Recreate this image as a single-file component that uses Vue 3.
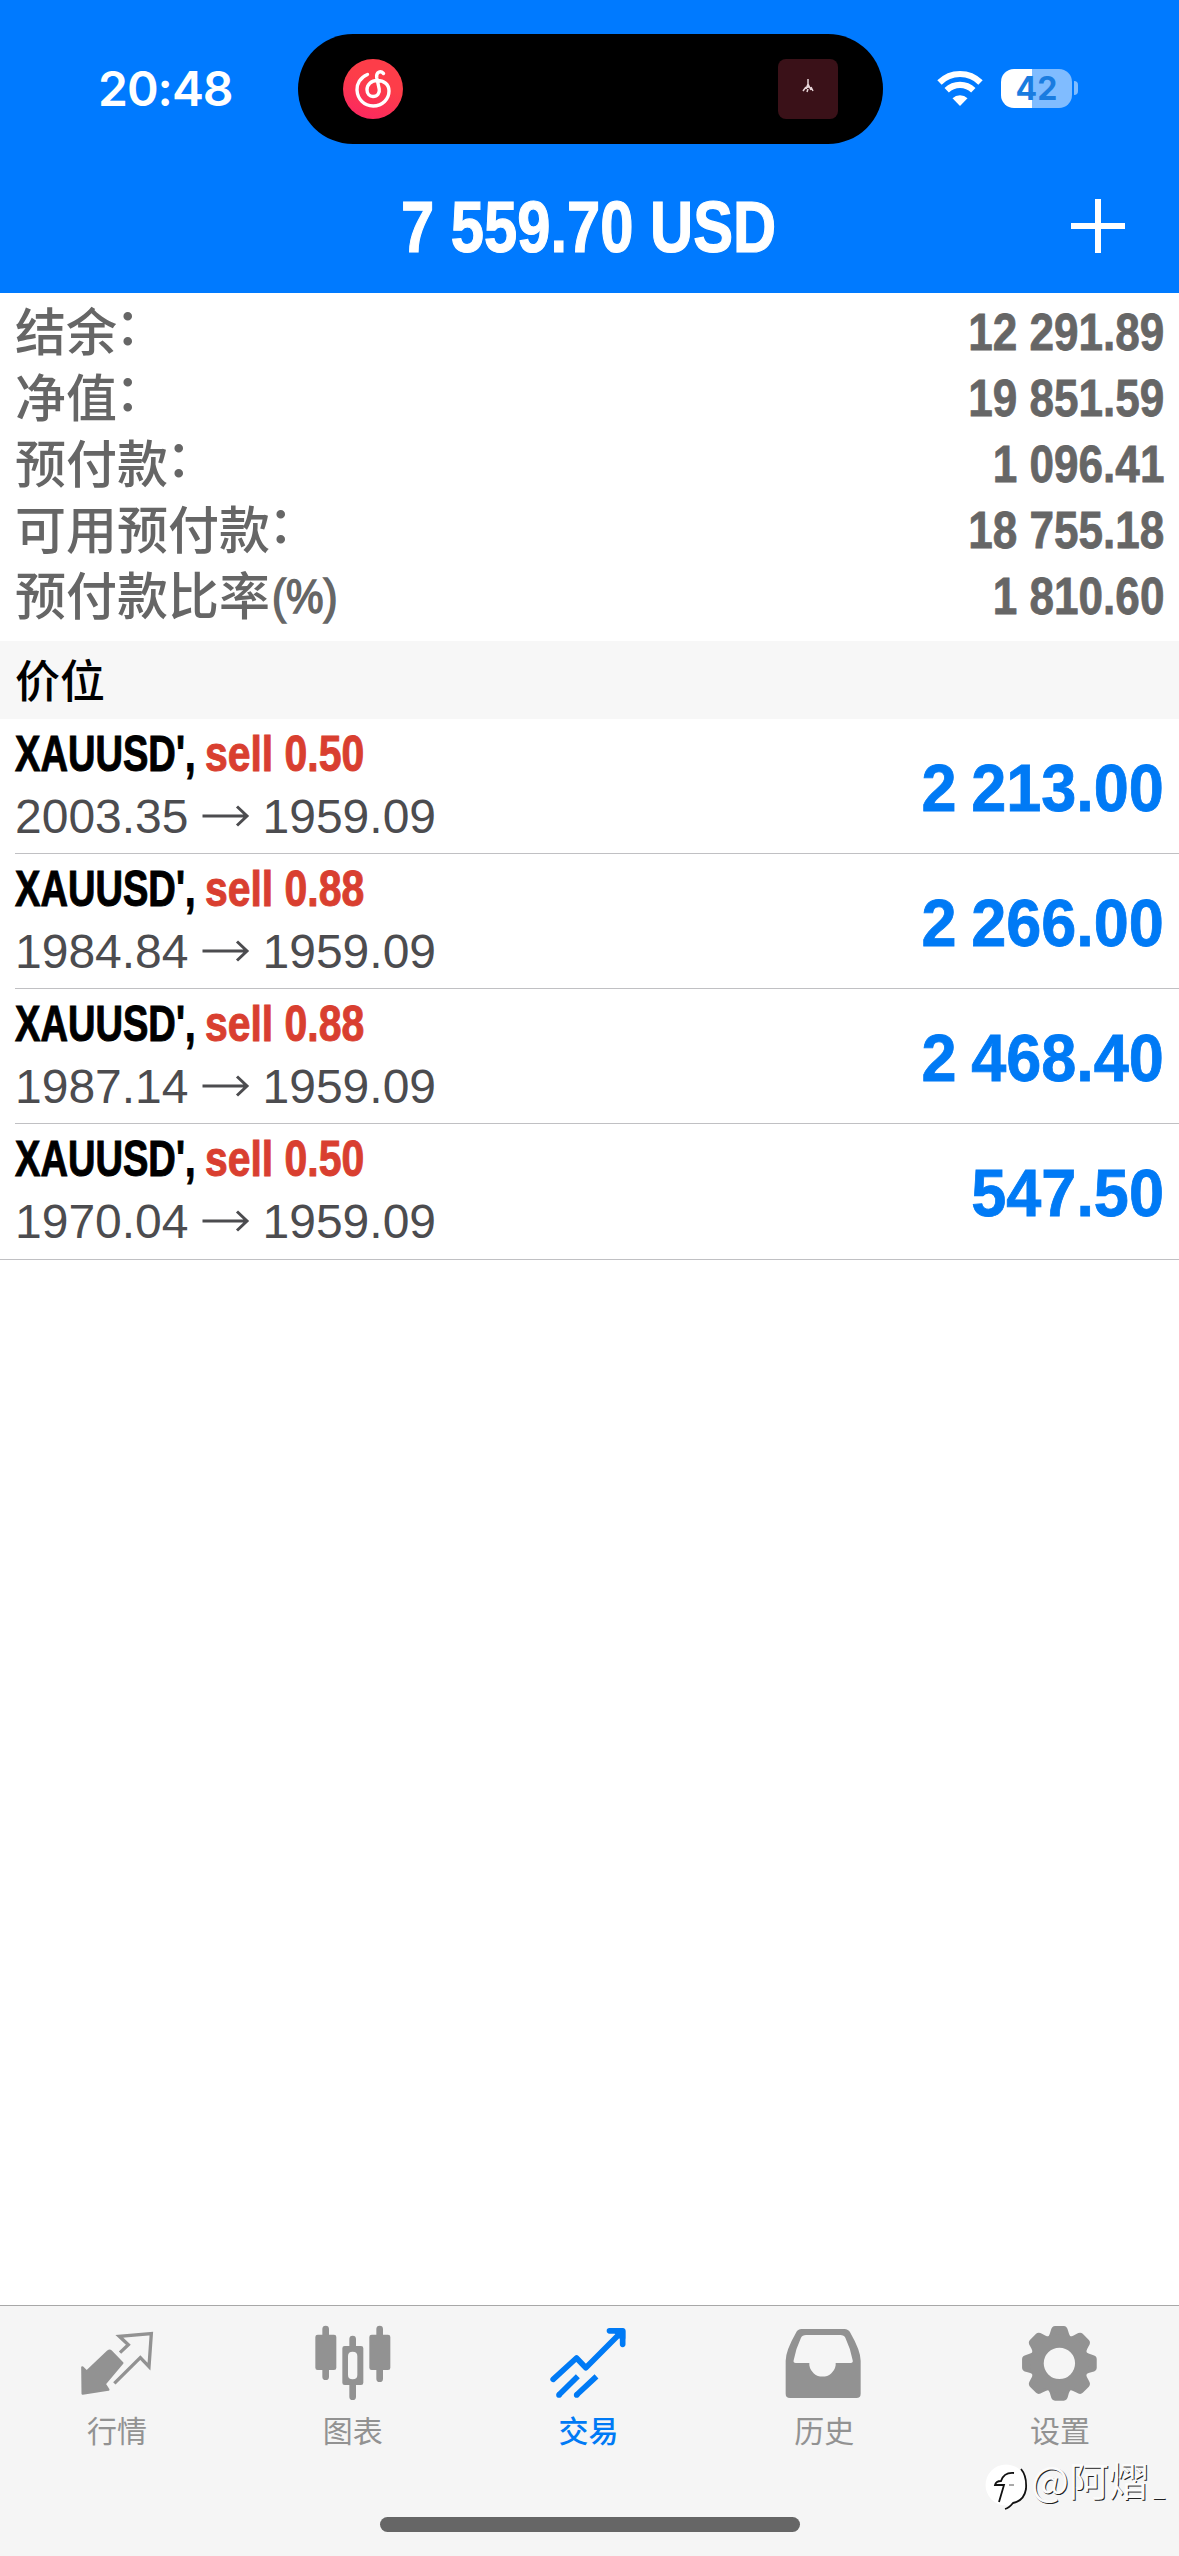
<script setup>
const account = [
  { label: '结余', colon: '：', value: '12 291.89' },
  { label: '净值', colon: '：', value: '19 851.59' },
  { label: '预付款', colon: '：', value: '1 096.41' },
  { label: '可用预付款', colon: '：', value: '18 755.18' },
  { label: '预付款比率', unit: '(%)', value: '1 810.60' },
]
const positions = [
  { symbol: "XAUUSD',", side: 'sell 0.50', open: '2003.35', now: '1959.09', profit: '2 213.00' },
  { symbol: "XAUUSD',", side: 'sell 0.88', open: '1984.84', now: '1959.09', profit: '2 266.00' },
  { symbol: "XAUUSD',", side: 'sell 0.88', open: '1987.14', now: '1959.09', profit: '2 468.40' },
  { symbol: "XAUUSD',", side: 'sell 0.50', open: '1970.04', now: '1959.09', profit: '547.50' },
]
const teeth = [0, 45, 90, 135, 180, 225, 270, 315]
</script>

<template>
  <div class="screen">
    <header class="header">
      <div class="status">
        <div class="clock">20:48</div>
        <div class="island">
          <svg class="music" viewBox="0 0 60 60">
            <defs>
              <linearGradient id="musicFill" x1="0.7" y1="0" x2="0.3" y2="1">
                <stop offset="0.4" stop-color="#fd3d49" />
                <stop offset="1" stop-color="#fb2860" />
              </linearGradient>
            </defs>
            <circle cx="30" cy="30" r="30" fill="url(#musicFill)" />
            <path d="M24.5 15.5C17 18.500 13.700 25 14 31C14.500 40 21 47 30.200 47C39.500 47 46 40 46 32C46 25 40.500 21.500 34.500 21.500C28 21.500 24 25.500 24 30.800C24 34.800 26.700 37.500 30 37.500C34.500 37.500 37 34 36.200 30L33.700 18.500C33 13 37.500 11.300 40.500 14.500" fill="none" stroke="#fff" stroke-width="3.400" stroke-linecap="round" />
          </svg>
          <div class="album">
            <svg width="14" height="16" viewBox="0 0 14 16">
              <path d="M7 1v9M7 6l-2 5M7 6l3 6M2 13l3-4M12 13l-2-4M6 14l1-3" fill="none" stroke="#e8d5d8" stroke-width="1.500" />
            </svg>
          </div>
        </div>
        <svg class="wifi" viewBox="0 0 48 36">
          <path d="M3.500 12.500A29 29 0 0 1 44.500 12.500" fill="none" stroke="#fff" stroke-width="6.200" />
          <path d="M10.700 20.300A19 19 0 0 1 37.300 20.300" fill="none" stroke="#fff" stroke-width="6.200" />
          <path d="M24 36L16.500 28.300A11 11 0 0 1 31.500 28.300Z" fill="#fff" />
        </svg>
        <div class="battery"><span>42</span></div>
        <div class="nub"></div>
      </div>
      <div class="titlebar">
        <h1 class="total">7 559.70 USD</h1>
        <svg class="plus" viewBox="0 0 54 54"><path d="M27 0V54M0 27H54" stroke="#fff" stroke-width="6" /></svg>
      </div>
    </header>

    <section class="account">
      <div v-for="row in account" :key="row.label" class="account-row">
        <span class="account-label">{{ row.label }}<span v-if="row.colon" class="colon">{{ row.colon }}</span><span v-if="row.unit" class="unit">{{ row.unit }}</span></span>
        <span class="account-value">{{ row.value }}</span>
      </div>
    </section>

    <div class="section-title">价位</div>

    <section class="positions">
      <div v-for="(p, i) in positions" :key="i" class="position">
        <div class="info">
          <div class="deal"><span class="symbol">{{ p.symbol }}</span><span class="side">{{ p.side }}</span></div>
          <div class="prices">
            <span>{{ p.open }}</span>
            <svg class="arrow" viewBox="0 0 48 24"><path d="M0.500 12H45M35 2.500L45 12L35 21.500" fill="none" stroke="#4c4c4f" stroke-width="3" /></svg>
            <span>{{ p.now }}</span>
          </div>
        </div>
        <div class="profit">{{ p.profit }}</div>
      </div>
    </section>

    <nav class="tabs">
      <div class="tab">
        <svg viewBox="114 96 240 240">
          <path d="M213 184L247 219L194 282L205 299L128 311L127 232L140 245L204 184Q209 180 213 184Z" fill="#929292" stroke="#929292" stroke-width="7" stroke-linejoin="round" />
          <path d="M240 188L265 164L238 139L334 131L327 230L301 203L223 280" fill="none" stroke="#929292" stroke-width="10" />
        </svg>
        <span>行情</span>
      </div>
      <div class="tab">
        <svg viewBox="821 96 240 240" fill="#929292">
          <path d="M856 117V260M1018 117V266M937 147V170M937 284V320" stroke="#929292" stroke-width="20" stroke-linecap="round" />
          <rect x="825" y="134" width="63" height="106" rx="7" />
          <rect x="987" y="134" width="63" height="106" rx="7" />
          <path fill-rule="evenodd" d="M913 168H962Q969 168 969 175V278Q969 285 962 285H913Q906 285 906 278V175Q906 168 913 168ZM937 185Q923 185 923 198V255Q923 268 937 268Q951 268 951 255V198Q951 185 937 185Z" />
        </svg>
        <span>图表</span>
      </div>
      <div class="tab active">
        <svg viewBox="88.500 96 240 240" fill="none" stroke="#007af5" stroke-width="17" stroke-linejoin="round">
          <path d="M101 268L171 204L199 233L305 127" stroke-linecap="round" />
          <path d="M270 122.500H309.500V163" stroke-linecap="round" />
          <path d="M292 124H309V143Z" />
          <path d="M118 315L175 259M171 315L231 259" />
          <g fill="#007af5" stroke="none">
            <circle cx="118.500" cy="315" r="8.500" />
            <circle cx="171.500" cy="315" r="8.500" />
          </g>
        </svg>
        <span>交易</span>
      </div>
      <div class="tab">
        <svg viewBox="796 96 240 240">
          <path fill="#929292" fill-rule="evenodd" d="M846 117H974Q986 117 992 128Q1023 182 1023 212V311Q1023 324 1010 324H811Q798 324 798 311V212Q798 182 829 128Q834 117 846 117ZM859 135Q848 135 844 143Q829 174 822 211Q820 219 828 219H869V226A40 40 0 0 0 948 226V219H993Q1001 219 999 211Q992 174 977 143Q973 135 962 135Z" />
        </svg>
        <span>历史</span>
      </div>
      <div class="tab">
        <svg viewBox="243.300 96 240 240">
          <g transform="translate(358.500 220)" fill="#929292">
            <path v-for="a in teeth" :key="a" :transform="`rotate(${a})`" d="M-33 -80Q-29 -86 -26 -98Q-23 -112 -13 -112H13Q23 -112 26 -98Q29 -86 33 -80Z" />
            <circle r="67.500" fill="none" stroke="#929292" stroke-width="41" />
          </g>
        </svg>
        <span>设置</span>
      </div>
    </nav>
    <footer class="home"><div class="home-bar"></div></footer>

    <div class="watermark">
      <svg viewBox="0 0 46 50">
        <circle cx="21" cy="21" r="20.500" fill="#fff" />
        <path d="M36 5Q42 12 41 25Q39 37 28 39Q24 44 20 45" fill="none" stroke="#111" stroke-width="1.800" />
        <path d="M14 38L19 21H10Q11 17 16 17Q19 8 29 9" fill="none" stroke="#111" stroke-width="1.800" />
        <path d="M24 21H29" stroke="#555" stroke-width="1" />
      </svg>
      <span>@阿熠<span class="tail">_</span></span>
    </div>
  </div>
</template>

<style>
body {
  margin: 0;
  background: #fff;
}
</style>

<style scoped>
.screen {
  position: relative;
  display: flex;
  flex-direction: column;
  width: 1179px;
  height: 2556px;
  overflow: hidden;
  background: #fff;
  font-family: "Liberation Sans", "Noto Sans CJK SC", sans-serif;
}
.header {
  height: 293px;
  flex: none;
  background: #007aff;
  color: #fff;
}
.status {
  display: flex;
  align-items: center;
  height: 110px;
  padding-top: 34px;
}
.clock {
  width: 198px;
  padding-left: 98px;
  box-sizing: border-box;
  margin-right: 100px;
  font: 600 48px/60px Inter, sans-serif;
  letter-spacing: -1px;
  white-space: nowrap;
}
.island {
  display: flex;
  align-items: center;
  justify-content: space-between;
  width: 585px;
  height: 110px;
  box-sizing: border-box;
  padding: 0 45px;
  border-radius: 55px;
  background: #000;
}
.music {
  width: 60px;
  height: 60px;
}
.album {
  display: flex;
  align-items: center;
  justify-content: center;
  width: 60px;
  height: 60px;
  padding-bottom: 6px;
  box-sizing: border-box;
  border-radius: 8px;
  background: #3a1118;
}
.wifi {
  width: 48px;
  height: 36px;
  margin: 0 17px 2px 53px;
}
.battery {
  display: flex;
  align-items: center;
  justify-content: center;
  width: 71px;
  height: 39px;
  margin-bottom: 2px;
  border-radius: 13px;
  background: linear-gradient(to right, #fff 31px, #80bcff 31px);
  color: #1a7ce0;
  font: 700 32px/39px Inter, sans-serif;
}
.nub {
  width: 4px;
  height: 14px;
  margin: 0 0 2px 2px;
  border-radius: 0 5px 5px 0;
  background: #80bcff;
}
.titlebar {
  display: flex;
  align-items: center;
  justify-content: space-between;
  height: 149px;
  padding: 7px 54px 0 401px;
  box-sizing: content-box;
}
.total {
  margin: 3px 0 0;
  font-size: 73px;
  line-height: 80px;
  white-space: nowrap;
  transform: scaleX(0.818);
  transform-origin: left;
  -webkit-text-stroke: 1.2px currentColor;
}
.plus {
  width: 54px;
  height: 54px;
}
.account {
  padding: 5px 15px 13px;
  color: #666;
}
.account-row {
  display: flex;
  justify-content: space-between;
  align-items: center;
  height: 66px;
}
.account-label {
  display: flex;
  margin-top: 5px;
  font: 500 51px/66px "Liberation Sans", "Noto Sans CJK SC", sans-serif;
}
.colon {
  margin-top: -6px;
  margin-left: -2px;
}
.unit {
  margin-top: -2px;
  margin-left: 2px;
  font-size: 49px;
  transform: scaleX(0.86);
  transform-origin: left;
  -webkit-text-stroke: 1.600px currentColor;
}
.account-value {
  padding-top: 2px;
  font-size: 52px;
  line-height: 60px;
  font-weight: 700;
  transform: scaleX(0.848);
  transform-origin: right;
  -webkit-text-stroke: 0.800px currentColor;
}
.section-title {
  height: 78px;
  padding-left: 15px;
  background: #f7f7f7;
  color: #000;
  font: 500 45px/76px "Noto Sans CJK SC", sans-serif;
}
.positions {
  border-bottom: 1px solid #c0c0c3;
}
.position {
  display: flex;
  justify-content: space-between;
  height: 134px;
  margin-left: 15px;
  padding-right: 15px;
  border-bottom: 1px solid #c0c0c3;
}
.position:last-child {
  border-bottom: 0;
  height: 135px;
}
.deal {
  display: flex;
  margin-top: 5px;
  height: 60px;
  font-size: 50px;
  line-height: 60px;
  font-weight: 700;
  white-space: nowrap;
  -webkit-text-stroke: 1px currentColor;
}
.symbol {
  width: 190px;
  color: #000;
  transform: scaleX(0.762);
  transform-origin: left;
}
.side {
  color: #d93f30;
  transform: scaleX(0.818);
  transform-origin: left;
}
.prices {
  display: flex;
  align-items: center;
  height: 60px;
  margin-top: 3px;
  color: #4c4c4f;
  font-size: 48px;
  line-height: 60px;
}
.arrow {
  width: 48px;
  height: 24px;
  margin: 0 13px 2px;
}
.profit {
  color: #007af5;
  font-size: 67px;
  line-height: 137px;
  font-weight: 700;
  word-spacing: -3px;
  transform: scaleX(0.94);
  transform-origin: right;
  -webkit-text-stroke: 0.800px currentColor;
}
.tabs {
  display: flex;
  flex: none;
  height: 211px;
  margin-top: auto;
  border-top: 1px solid #a8a8a8;
  background: #f5f5f5;
}
.tab {
  display: flex;
  flex: 1;
  flex-direction: column;
  align-items: center;
  padding-top: 16px;
  color: #929292;
  font: 400 30px/44px "Noto Sans CJK SC", sans-serif;
}
.tab span {
  margin-right: 2px;
}
.tab svg {
  width: 80px;
  height: 80px;
  margin-bottom: 5px;
}
.tab.active {
  color: #007af5;
  font-weight: 500;
}
.home {
  display: flex;
  flex: none;
  justify-content: center;
  height: 39px;
  background: #f5f5f5;
}
.home-bar {
  width: 420px;
  height: 15px;
  border-radius: 8px;
  background: #666;
}
.watermark {
  position: absolute;
  left: 985px;
  top: 2452px;
  display: flex;
  align-items: center;
  height: 60px;
  color: #fbfbfb;
  font: 400 40px/60px "Noto Sans CJK SC", sans-serif;
  text-shadow: 1px 1px 0 #222;
}
.watermark svg {
  width: 46px;
  height: 50px;
  margin: 14px 0 0;
}
.tail {
  margin-left: 4px;
  font-size: 22px;
}
</style>
